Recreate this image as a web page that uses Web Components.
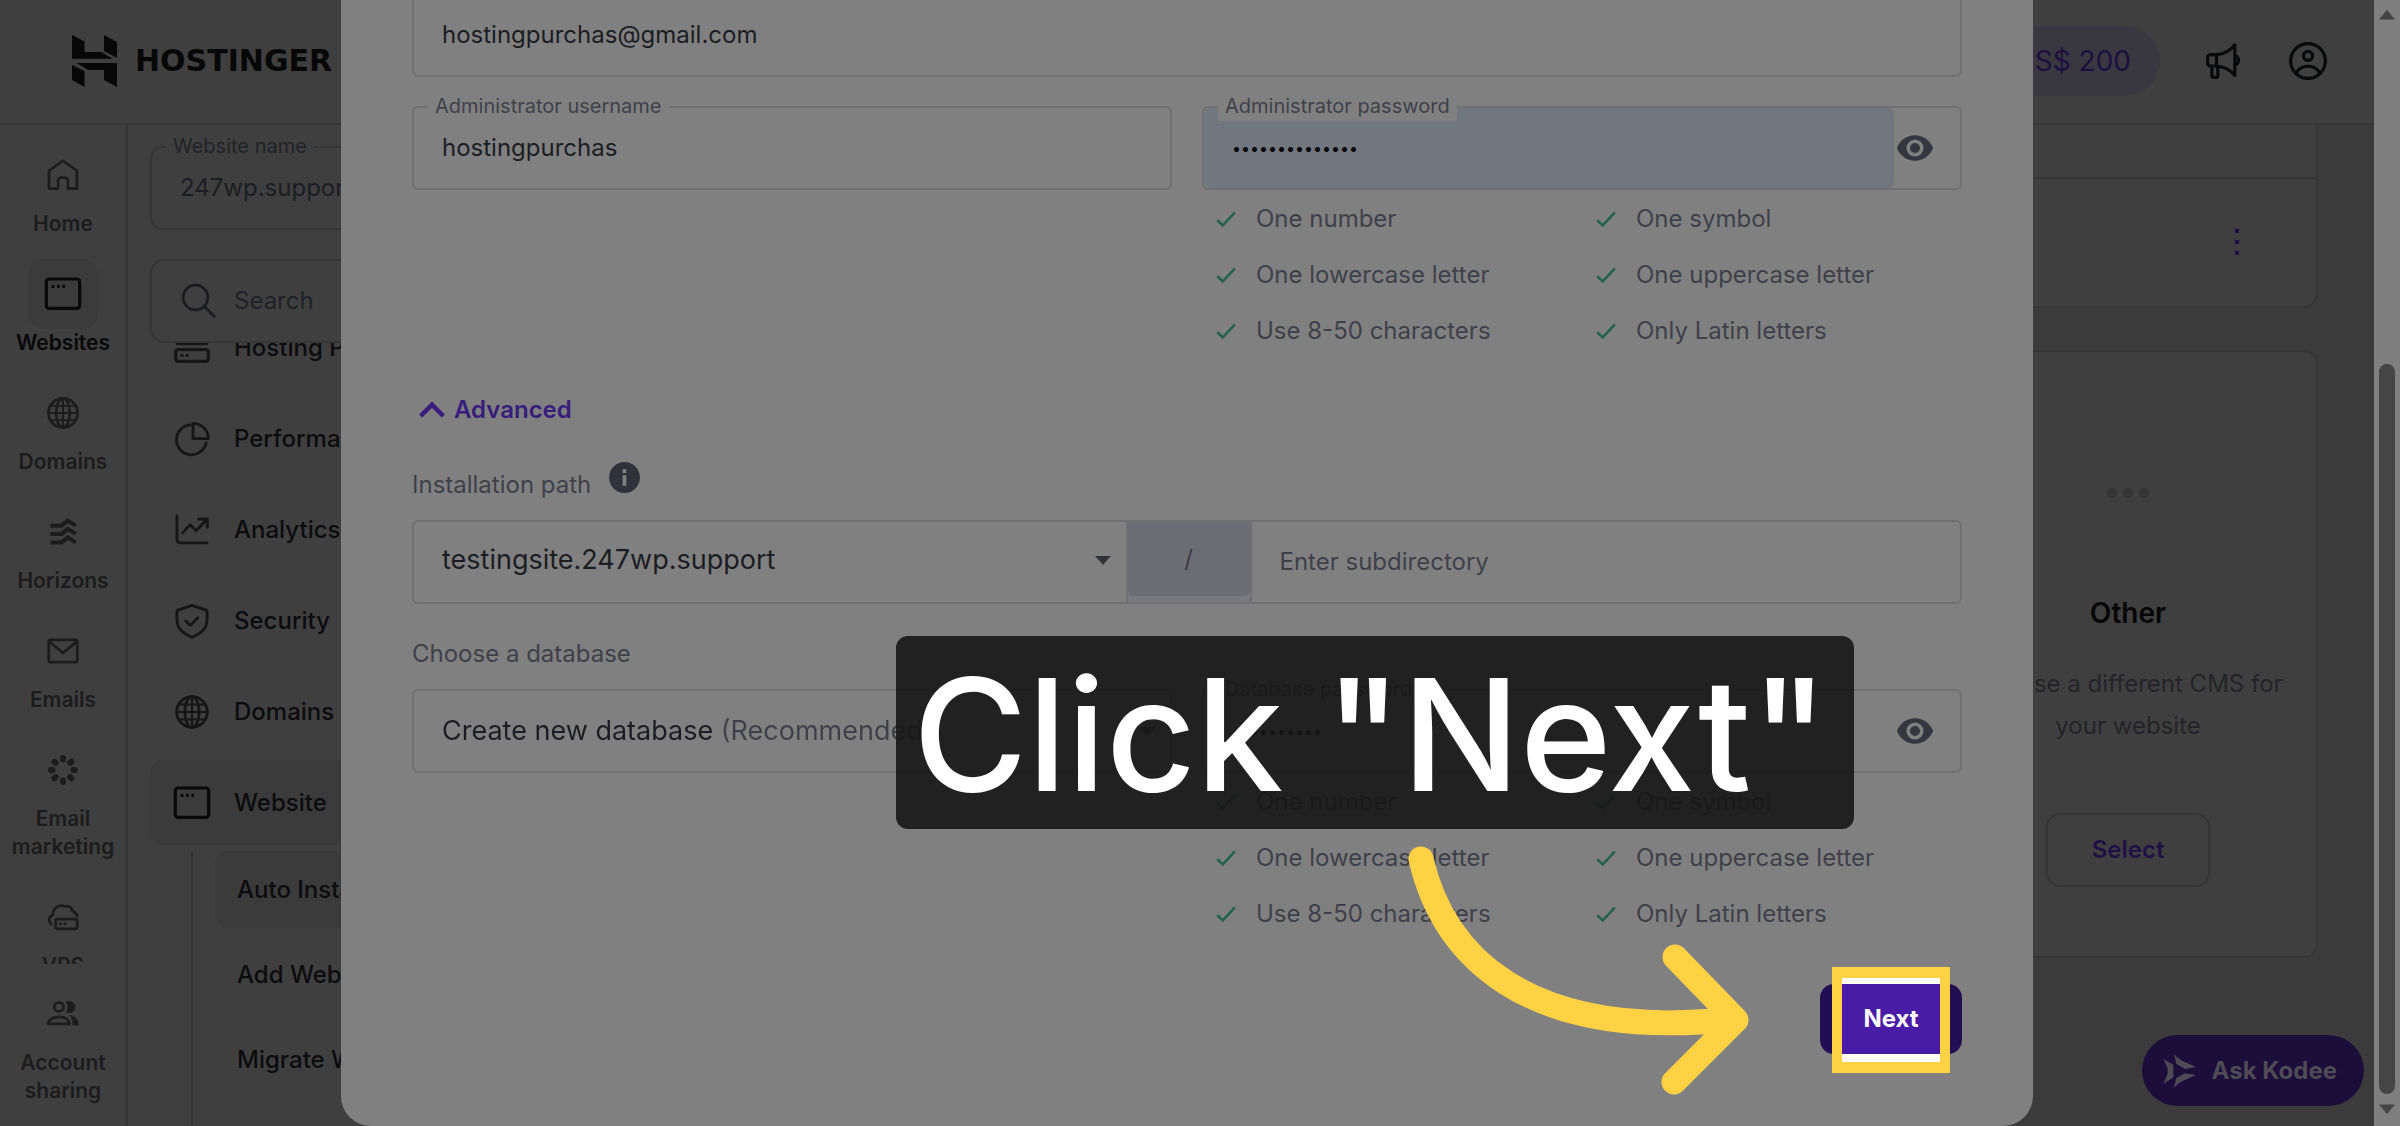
<!DOCTYPE html>
<html lang="en">
<head>
<meta charset="utf-8">
<title>Auto Installer</title>
<style>
  html, body {
    margin: 0;
    height: 100%;
    overflow: hidden;
  }

  body {
    font-family: Inter, "Liberation Sans", sans-serif;
    font-size: 24px;
    line-height: 32px;
    color: #0c0c0e;
    background: #3f3f3f;
    --line: #363636;
    --soft: #3b3b3b;
    --ink: #1c1d22;
    --muted: #3f4049;
    --purple: #1f1145;
  }
</style>
</head>
<body>
<hosting-app></hosting-app>

<script>
/* Base class: clones the static template into an open shadow root. */
class BaseElement extends HTMLElement {
  constructor() {
    super();
    this.attachShadow({ mode: 'open' });
  }

  connectedCallback() {
    const template = document.createElement('template');
    template.innerHTML = `<style>*{box-sizing:border-box}</style>${this.template}`;
    this.shadowRoot.replaceChildren(template.content.cloneNode(true));
  }

  attr(name, fallback = '') {
    return this.getAttribute(name) || fallback;
  }
}

const ICONS = {
  home: '<path d="M3.2 9.2 12 3l8.8 6.2v11.4h-5.7v-5a2 2 0 0 0-2-2h-2.2a2 2 0 0 0-2 2v5H3.2z"/>',
  window: '<rect x="2" y="3" width="20" height="17.6" rx="1.6" stroke-width="1.9"/><path d="M5.2 7.4h1.6M8.4 7.4h1.6M11.6 7.4h1.6" stroke-width="1.9" stroke-linecap="butt"/>',
  globe: '<circle cx="12" cy="12" r="9.2"/><ellipse cx="12" cy="12" rx="4.3" ry="9.2"/><path d="M12 2.8v18.4M2.8 12h18.4M4.3 7.5h15.4M4.3 16.5h15.4" stroke-width="1.2"/>',
  horizons: '<path d="M4 8h7l4-3.2L20 8M4 13.2h7l4-3.2 5 3.2M4 18.6h7l4-3.2 5 3.2" stroke-width="2.5" stroke-linecap="butt" stroke-linejoin="miter"/>',
  mail: '<rect x="3" y="5" width="18" height="14" rx="1.2"/><path d="m3.5 6.2 8.5 7 8.5-7"/>',
  burst: '<path d="M12 4.4v1M12 18.600v1M4.400 12h1M18.600 12h1M6.600 6.700l.8.8M16.500 16.500l.8.800M6.600 17.300l.8-.8M16.500 7.500l.8-.8" stroke-width="3.700"/>',
  vps: '<path d="M4.600 16.500C2.600 15 3 11.400 5.600 10.800 5.500 6.600 9.400 3.600 13 5.300c3-.5 4.600 1 5 3 1.700.6 2.700 1.600 3 3.200"/><rect x="7.300" y="13.300" width="13.700" height="6.200" rx="1.300"/><path d="M10.200 16.400h.3M13.200 16.400h.3"/>',
  people: '<circle cx="9.400" cy="7.500" r="2.900"/><path d="M2.700 18.200c0-5.800 13.400-5.800 13.400 0z"/><path d="M14.200 4.300a3.700 3.700 0 1 1 0 6.600c1.300-2 1.300-4.600 0-6.600zM16.800 13c3 .9 5 2.600 5 5.900h-3.600c.2-2.300-.3-4.200-1.400-5.900z" fill="currentColor" stroke-width=".4"/>',
  server: '<path d="M3 9.500h18"/><rect x="2.300" y="13" width="19.400" height="7" rx="1.400" stroke-width="1.900"/><path d="M5.700 16.500h.5M8.900 16.500h.5"/>',
  pie: '<path d="M11 3.500a9 9 0 1 0 9.500 10.800"/><path d="M12.600 2.600v9.200h9.200a9.200 9.200 0 0 0-9.200-9.200z"/>',
  chart: '<path d="M3 3.400v14.200c0 1.300.8 2.100 2 2.100h16"/><path d="m6.500 13.600 4.400-4.800 3.600 3.600 6-6.400M16 5.400h5.200v5"/>',
  shield: '<path d="m12 2.600 9 3v6c0 4.700-3.700 8-9 10.200C6.700 19.600 3 16.300 3 11.600v-6z"/><path d="m8.300 12 2.700 2.600 4.600-4.500"/>',
  search: '<circle cx="9.800" cy="9.800" r="7.800"/><path d="m15.500 15.500 6.200 6.300"/>',
  megaphone: '<path d="M7.500 8.200c4.500-.2 8.300-2.400 11-5.900v18.400c-2.700-3.300-6.500-5.300-11-5.700zM7.500 8.200H3.800a1.600 1.600 0 0 0-1.600 1.600v3.600A1.600 1.600 0 0 0 3.800 15h3.700M4.700 15.200v5.600a1 1 0 0 0 1 1h1.600a1 1 0 0 0 1-1v-5.600M18.600 8.800a2.900 2.900 0 0 1 0 5.600"/>',
  user: '<circle cx="12" cy="12" r="10.400"/><circle cx="12" cy="8.900" r="2.700"/><path d="M5 19.200c2.700-5.400 11.300-5.400 14 0"/>',
  check: '<path d="m4.500 13 4.700 4.600L19.600 6.400" stroke-linecap="butt" stroke-linejoin="miter"/>',
  chevron: '<path d="m5.200 15.600 6.800-6.800 6.800 6.800" stroke-width="2.700" stroke-linecap="butt" stroke-linejoin="miter"/>',
  caret: '<path d="M7 9.500h10L12 15z" fill="currentColor" stroke="none"/>',
  eye: '<path d="M12 4C6.800 4 2.400 7.200.6 12c1.800 4.800 6.200 8 11.400 8s9.600-3.200 11.400-8C21.600 7.200 17.200 4 12 4zm0 13.400a5.400 5.400 0 1 1 0-10.800 5.400 5.400 0 0 1 0 10.800zm0-8.600a3.200 3.200 0 1 0 0 6.400 3.200 3.200 0 0 0 0-6.400z" fill="currentColor" fill-rule="evenodd" stroke="none"/>',
  info: '<path d="M12 2a10 10 0 1 0 0 20 10 10 0 0 0 0-20zm-1.200 4.600h2.400V9h-2.400zm0 4h2.400v6.800h-2.400z" fill="currentColor" fill-rule="evenodd" stroke="none"/>',
  kebab: '<path d="M10.700 3.700h2.600v2.600h-2.600zM10.700 10.700h2.600v2.600h-2.600zM10.700 17.500h2.600v2.600h-2.600z" fill="currentColor" stroke="none"/>',
  kodee: '<path d="M1 3.500 8 7.600v9L1 21l3-7v-4zM8.500 0c2.400 2.800 5 4.600 8.500 6l7 3.200-8 1.300-6-3.700zM8.500 24c2.400-2.800 5-4.600 8.500-6l7-3.200-8-1.300-6 3.700z" fill="currentColor" stroke="none"/>'
};

class AppIcon extends BaseElement {
  get template() {
    return `
      <style>
        :host { display: inline-flex; flex: none; width: var(--size, 38px); height: var(--size, 38px); }
        svg { width: 100%; height: 100%; }
      </style>
      <svg viewBox="0 0 24 24" fill="none" stroke="currentColor" stroke-width="${this.attr('weight', '1.7')}"
        stroke-linecap="round" stroke-linejoin="round" aria-hidden="true">${ICONS[this.attr('name')]}</svg>
    `;
  }
}

class AppHeader extends BaseElement {
  get template() {
    return `
      <style>
        :host {
          display: flex;
          flex: none;
          align-items: center;
          justify-content: space-between;
          height: 125px;
          padding: 0 46px 2px 72px;
          border-bottom: 2px solid var(--line);
        }
        .logo { display: flex; align-items: center; gap: 18px; color: #070707; text-decoration: none;
          font: 700 30px/32px "DejaVu Sans", sans-serif; }
        .logo svg { width: 45px; height: 52px; }
        .actions { display: flex; align-items: center; gap: 44px; color: #08090a; }
        .credit { height: 70px; padding: 0 29px; border: 0; border-radius: 35px; background: #39373f;
          color: #1c1040; font: 400 28px/32px Inter, sans-serif; }
        .plain { display: flex; padding: 0; border: 0; background: none; color: inherit; }
        app-icon { --size: 40px; }
      </style>
      <a class="logo" href="#">
        <svg viewBox="0 0 45 52" fill="currentColor" aria-hidden="true">
          <path d="M0 0l12.500 6.500V17h17l11 6.800H0zM32 0l13 7v16l-13-7zM4.500 28H45v24l-13-7V35H16zM0 30l12.500 6v16L0 45z"/>
        </svg>
        HOSTINGER
      </a>
      <div class="actions">
        <button class="credit">US$ 200</button>
        <button class="plain" aria-label="News"><app-icon name="megaphone" weight="1.900"></app-icon></button>
        <button class="plain" aria-label="Account"><app-icon name="user" weight="1.900"></app-icon></button>
      </div>
    `;
  }
}

class RailItem extends BaseElement {
  get template() {
    return `
      <style>
        :host { display: block; flex: none; }
        a { display: flex; flex-direction: column; align-items: center; color: #1c1c1d; text-decoration: none;
          text-align: center; font-size: 21px; font-weight: 600; line-height: 28px; }
        .box { display: grid; place-items: center; width: 70px; height: 70px; border-radius: 16px; }
        :host([active]) a { color: #080809; }
        :host([active]) .box { background: var(--soft); }
        :host([active]) app-icon { --size: 40px; }
      </style>
      <a href="#"><span class="box"><app-icon name="${this.attr('icon')}"></app-icon></span><slot></slot></a>
    `;
  }
}

class AppRail extends BaseElement {
  get template() {
    return `
      <style>
        :host { display: flex; flex: none; flex-direction: column; width: 128px; border-right: 2px solid var(--line); }
        nav { display: flex; flex: 1; flex-direction: column; gap: 21px; min-height: 0; padding-top: 15px; overflow: hidden; }
        footer { padding: 15px 0 21px; }
      </style>
      <nav aria-label="Products">
        <rail-item icon="home">Home</rail-item>
        <rail-item icon="window" active>Websites</rail-item>
        <rail-item icon="globe">Domains</rail-item>
        <rail-item icon="horizons">Horizons</rail-item>
        <rail-item icon="mail">Emails</rail-item>
        <rail-item icon="burst">Email<br>marketing</rail-item>
        <rail-item icon="vps">VPS</rail-item>
      </nav>
      <footer><rail-item icon="people">Account<br>sharing</rail-item></footer>
    `;
  }
}

class SideLink extends BaseElement {
  get template() {
    const icon = this.attr('icon');
    return `
      <style>
        :host { display: block; flex: none; }
        a { display: flex; align-items: center; gap: 22px; height: 85px; padding: 0 22px; border-radius: 14px;
          color: #0c0c0e; text-decoration: none; font-weight: 500; white-space: nowrap; }
        app-icon { --size: 40px; color: #161616; }
        :host([sub]) a { height: 77px; }
        :host([active]) a { background: var(--soft); }
        :host([active]) app-icon { color: #080808; }
      </style>
      <a href="#">${icon ? `<app-icon name="${icon}"></app-icon>` : ''}<slot></slot></a>
    `;
  }
}

class AppSidebar extends BaseElement {
  get template() {
    return `
      <style>
        :host { display: flex; flex: none; flex-direction: column; width: 440px; padding: 21px 22px 0; }
        .site { margin-bottom: 29px; --bg: #3f3f3f; --field-line: var(--line); --radius: 12px; --muted: #222327; }
        .search { display: flex; flex: none; align-items: center; gap: 16px; height: 84px; padding: 0 28px;
          border: 2px solid var(--line); border-radius: 14px; color: #1a1b1f; }
        .search input { flex: 1; min-width: 0; padding: 0; border: 0; outline: 0; background: none; color: inherit; font: inherit; }
        .search input::placeholder { color: #212226; opacity: 1; }
        .list { display: flex; flex: 1; flex-direction: column; gap: 6px; min-height: 0; overflow: hidden; }
        .list > side-link:first-child { margin-top: -38px; }
        .sub { display: flex; flex: none; flex-direction: column; gap: 8px; margin-left: 41px; padding: 0 0 200px 22px;
          border-left: 2px solid var(--line); }
      </style>
      <text-field class="site" label="Website name" value="247wp.support"></text-field>
      <label class="search"><app-icon name="search"></app-icon><input type="search" placeholder="Search" aria-label="Search"></label>
      <nav class="list" aria-label="Website menu">
        <side-link icon="server">Hosting Plan</side-link>
        <side-link icon="pie">Performance</side-link>
        <side-link icon="chart">Analytics</side-link>
        <side-link icon="shield">Security</side-link>
        <side-link icon="globe">Domains</side-link>
        <side-link icon="window" active>Website</side-link>
        <div class="sub">
          <side-link sub active>Auto Installer</side-link>
          <side-link sub>Add Website</side-link>
          <side-link sub>Migrate Website</side-link>
        </div>
      </nav>
    `;
  }
}

class AppContent extends BaseElement {
  get template() {
    return `
      <style>
        :host { display: flex; flex: 1; flex-direction: column; align-items: stretch; gap: 42px; min-width: 0;
          padding-right: 56px; background: var(--soft); }
        .installed { flex: none; border: 2px solid var(--line); border-top: 0; border-radius: 0 0 14px 14px; background: #3f3f3f; }
        .head { height: 54px; border-bottom: 2px solid var(--line); }
        .row { display: flex; align-items: center; justify-content: flex-end; height: 127px; padding: 0 60px 2px; }
        .row button { display: flex; padding: 0; border: 0; background: none; color: var(--purple); }
        .other { display: flex; flex-direction: column; align-items: center; align-self: flex-end; width: 380px; height: 608px;
          padding-top: 136px; border: 2px solid var(--line); border-radius: 14px; background: #3f3f3f; text-align: center; }
        .dots { display: flex; gap: 6px; }
        .dots i { width: 10px; height: 10px; border-radius: 5px; background: #363636; }
        h3 { margin: 95px 0 30px; font-size: 28px; font-weight: 600; line-height: 40px; color: #060607; }
        p { margin: 0; line-height: 42px; color: #242428; }
        .select { width: 164px; height: 74px; margin-top: 66px; border: 2px solid var(--line); border-radius: 14px;
          background: none; color: var(--purple); font: 600 24px/32px Inter, sans-serif; }
      </style>
      <section class="installed">
        <div class="head"></div>
        <div class="row"><button aria-label="More"><app-icon name="kebab"></app-icon></button></div>
      </section>
      <section class="other">
        <div class="dots"><i></i><i></i><i></i></div>
        <h3>Other</h3>
        <p>Choose a different CMS for<br>your website</p>
        <button class="select">Select</button>
      </section>
    `;
  }
}

/* Outlined field with its label sitting on the top border. */
class TextField extends BaseElement {
  get template() {
    const type = this.attr('type', 'text');
    return `
      <style>
        :host { display: flex; position: relative; flex: none; align-items: stretch; height: 84px;
          border: 2px solid var(--field-line, #707073); border-radius: var(--radius, 6px); }
        label { position: absolute; top: -17px; left: 14px; padding: 0 7px; background: var(--bg, #808080);
          color: var(--muted); font-size: 20px; line-height: 30px; }
        input { flex: 1; min-width: 0; padding: 0 28px; border: 0; outline: 0; border-radius: 6px; background: none;
          color: var(--ink); font: inherit; }
        input::placeholder { color: var(--muted); opacity: 1; }
        input[type=password] { font-size: 16px; color: #050505; }
        :host([filled]) input { background: #72777f; }
        button { display: flex; align-items: center; padding: 0 26px 0 2px; border: 0; background: none; color: #353640; }
      </style>
      ${this.hasAttribute('label') ? `<label for="field">${this.attr('label')}</label>` : ''}
      <input id="field" type="${type}" value="${this.attr('value')}" placeholder="${this.attr('placeholder')}">
      ${type === 'password' ? '<button aria-label="Show password"><app-icon name="eye"></app-icon></button>' : ''}
    `;
  }
}

class PasswordRules extends BaseElement {
  get template() {
    const rules = ['One number', 'One symbol', 'One lowercase letter', 'One uppercase letter', 'Use 8-50 characters', 'Only Latin letters'];
    return `
      <style>
        :host { display: block; padding: 1px 0 0 10px; }
        ul { display: grid; grid-template-columns: minmax(0, 380px) 1fr; margin: 0; padding: 0; list-style: none; }
        li { display: flex; align-items: center; gap: 16px; height: 56px; color: var(--muted); white-space: nowrap; }
        app-icon { --size: 28px; color: #22614c; }
      </style>
      <ul>${rules.map(rule => `<li><app-icon name="check" weight="2.200"></app-icon>${rule}</li>`).join('')}</ul>
    `;
  }
}

class InstallDialog extends BaseElement {
  get template() {
    return `
      <style>
        :host { display: flex; position: absolute; inset: 0 26px 0 0; align-items: flex-end; justify-content: center; }
        form { width: 100%; max-width: 1692px; padding: 40px 71px 72px; border-radius: 0 0 30px 30px;
          background: #808080; color: var(--ink); }
        .two { display: grid; grid-template-columns: 1fr 1fr; gap: 0 30px; }
        .email { margin-bottom: 29px; }
        .advanced { display: flex; align-items: center; gap: 2px; height: 40px; margin: 31px 0 35px; padding: 0;
          border: 0; background: none; color: #371d7c; font: 600 24px/32px Inter, sans-serif; }
        .advanced app-icon { --size: 40px; }
        .caption { display: flex; align-items: center; gap: 15px; height: 40px; margin-bottom: 15px; color: var(--muted); }
        .caption app-icon { --size: 37px; margin-bottom: 16px; color: #30313a; }
        .pick { display: flex; position: relative; flex: 1; align-items: center; }
        .pick select { flex: 1; height: 100%; padding: 0 28px; border: 0; outline: 0; appearance: none; background: none;
          color: var(--ink); font: 400 27px/36px Inter, sans-serif; }
        .pick app-icon { position: absolute; right: 4px; color: #30313a; }
        .path { display: flex; height: 84px; margin-bottom: 30px; border: 2px solid #707073; border-radius: 6px; }
        .path .pick { flex: 713 1 0; margin-bottom: 5px; }
        .path text-field { flex: 710 1 0; height: auto; border: 0; }
        .slash { flex: none; width: 126px; border: solid #707073; border-width: 0 2px; background: #797a7f; }
        .slash span { display: block; height: 74px; border-radius: 0 0 6px 6px; background: #6b6d73; color: #3a3b43;
          text-align: center; line-height: 74px; }
        .db { height: 84px; border: 2px solid #707073; border-radius: 6px; }
        .db select { background: linear-gradient(90deg, #1c1d22 302px, #3f4049 302px); background-clip: text;
          -webkit-background-clip: text; color: transparent; }
        .db option { color: #1c1d22; }
        .end { display: flex; justify-content: flex-end; margin-top: 42px; }
      </style>
      <form onsubmit="return false">
        <text-field class="email" label="Administrator email" value="hostingpurchas@gmail.com"></text-field>
        <div class="two">
          <text-field label="Administrator username" value="hostingpurchas"></text-field>
          <div>
            <text-field label="Administrator password" type="password" value="abcdefgh123456" filled></text-field>
            <password-rules></password-rules>
          </div>
        </div>
        <button class="advanced" type="button"><app-icon name="chevron"></app-icon>Advanced</button>
        <label class="caption" for="path">Installation path<app-icon name="info"></app-icon></label>
        <div class="path">
          <div class="pick"><select id="path"><option>testingsite.247wp.support</option></select><app-icon name="caret"></app-icon></div>
          <div class="slash"><span>/</span></div>
          <text-field placeholder="Enter subdirectory"></text-field>
        </div>
        <label class="caption" for="db">Choose a database</label>
        <div class="two">
          <div class="pick db"><select id="db"><option>Create new database (Recommended)</option></select><app-icon name="caret"></app-icon></div>
          <div>
            <text-field label="Database password" type="password" value="abcdef1234"></text-field>
            <password-rules></password-rules>
          </div>
        </div>
        <div class="end"><spot-button>Next</spot-button></div>
      </form>
    `;
  }
}

/* Dimmed button with a lit, framed area over its middle. */
class SpotButton extends BaseElement {
  get template() {
    return `
      <style>
        :host { display: block; position: relative; }
        button { display: block; position: relative; width: 142px; height: 70px; border: 0; border-radius: 14px;
          background: #220e53; color: #fff; font: 700 24px/32px Inter, sans-serif; }
        .frame { position: absolute; inset: -17px 12px -19px; border: solid #ffd244; border-width: 11px 10px; background: #fff; }
        .frame::before { content: ""; position: absolute; inset: 6px 0 8px; background: #481ca6; }
        .text { position: relative; }
      </style>
      <button><span class="frame"></span><span class="text"><slot></slot></span></button>
    `;
  }
}

class KodeeButton extends BaseElement {
  get template() {
    return `
      <style>
        :host { display: block; position: absolute; right: 36px; bottom: 20px; }
        button { display: flex; align-items: center; gap: 16px; height: 71px; padding: 0 27px 0 20px; border: 0; border-radius: 36px;
          background: #1b0e3b; color: #4e4b55; font: 700 24px/32px Inter, sans-serif; }
        app-icon { --size: 34px; }
      </style>
      <button><app-icon name="kodee"></app-icon>Ask Kodee</button>
    `;
  }
}

class StepGuide extends BaseElement {
  get template() {
    return `
      <style>
        :host { display: block; position: absolute; top: 636px; left: 896px; }
        .tip { width: 958px; height: 193px; padding-left: 17px; border-radius: 12px; background: rgba(22, 22, 22, .9); color: #fff;
          font-size: 156px; font-weight: 500; line-height: 198px; white-space: nowrap; }
        svg { position: absolute; top: 193px; left: 504px; width: 370px; height: 280px; }
      </style>
      <div class="tip"><slot></slot></div>
      <svg viewBox="1400 829 370 280" fill="none" stroke="#ffd244" stroke-width="25" stroke-linecap="round" stroke-linejoin="round" aria-hidden="true">
        <path d="M1421 859C1442 950 1520 1043 1735 1019M1675 957l61 63-62 62"/>
      </svg>
    `;
  }
}

class PageScrollbar extends BaseElement {
  get template() {
    return `
      <style>
        :host { display: flex; position: relative; flex: none; flex-direction: column; align-items: center; width: 26px;
          padding: 10px 0 12px; background: #7f7f7f; }
        svg { flex: none; width: 16px; height: 10px; fill: #444; }
        .track { display: flex; flex: 1; flex-direction: column; justify-content: flex-end; padding-bottom: 10px; }
        .thumb { width: 16px; height: 68%; border-radius: 8px; background: #454545; }
      </style>
      <svg viewBox="0 0 16 10"><path d="M0 9.500 8 0l8 9.500z"/></svg>
      <div class="track"><div class="thumb"></div></div>
      <svg viewBox="0 0 16 10"><path d="M0 .5 8 10 16 .5z"/></svg>
    `;
  }
}

class HostingApp extends BaseElement {
  get template() {
    return `
      <style>
        :host { display: flex; position: relative; height: 100vh; overflow: hidden; }
        .page { display: flex; flex: 1; flex-direction: column; min-width: 0; }
        .body { display: flex; flex: 1; min-height: 0; }
      </style>
      <div class="page">
        <app-header></app-header>
        <div class="body">
          <app-rail></app-rail>
          <app-sidebar></app-sidebar>
          <app-content></app-content>
        </div>
      </div>
      <kodee-button></kodee-button>
      <install-dialog></install-dialog>
      <page-scrollbar></page-scrollbar>
      <step-guide>Click "Next"</step-guide>
    `;
  }
}

customElements.define('app-icon', AppIcon);
customElements.define('app-header', AppHeader);
customElements.define('rail-item', RailItem);
customElements.define('app-rail', AppRail);
customElements.define('side-link', SideLink);
customElements.define('text-field', TextField);
customElements.define('app-sidebar', AppSidebar);
customElements.define('app-content', AppContent);
customElements.define('password-rules', PasswordRules);
customElements.define('spot-button', SpotButton);
customElements.define('install-dialog', InstallDialog);
customElements.define('kodee-button', KodeeButton);
customElements.define('step-guide', StepGuide);
customElements.define('page-scrollbar', PageScrollbar);
customElements.define('hosting-app', HostingApp);
</script>
</body>
</html>
